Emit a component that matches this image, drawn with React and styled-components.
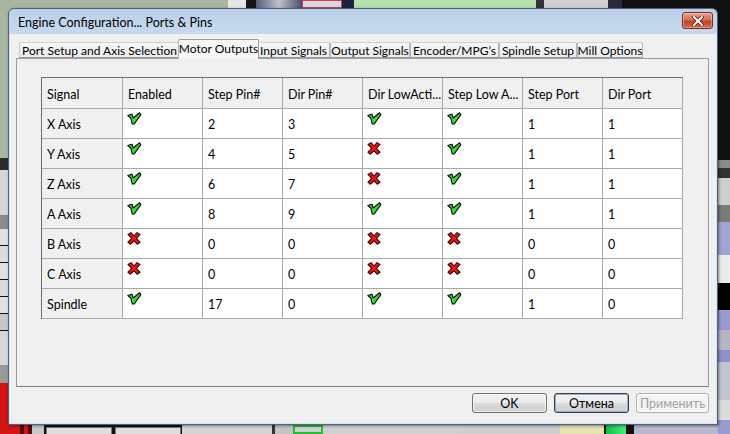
import React from 'react';
import styled, { createGlobalStyle } from 'styled-components';

const Global = createGlobalStyle`
  html, body { margin: 0; padding: 0; }
  body {
    width: 730px; height: 434px; overflow: hidden;
    font-family: Lato, "Noto Sans", "DejaVu Sans", sans-serif;
    font-size: 12px; color: #000;
  }
`;

const Desktop = styled.div`
  position: relative;
  width: 730px;
  height: 434px;
  overflow: hidden;
  background: #111;
`;

const Patch = styled.div`
  position: absolute;
  left: ${p => p.$x}px;
  top: ${p => p.$y}px;
  width: ${p => p.$w}px;
  height: ${p => p.$h}px;
  background: ${p => p.$c};
  border: ${p => p.$b || 'none'};
  box-sizing: border-box;
  overflow: hidden;
  font-family: "Liberation Sans", Arial, sans-serif;
  font-size: ${p => p.$fs || 12}px;
  color: ${p => p.$tc || '#000'};
  line-height: 1;
`;

const PatchText = styled.span`
  position: absolute;
  left: ${p => p.$x}px;
  top: ${p => p.$y}px;
  white-space: nowrap;
`;

const patches = [
  { x: 0, y: 0, w: 228, h: 160, c: '#a8b59f' },
  { x: 228, y: 0, w: 18, h: 8, c: '#e6e6e6' },
  { x: 246, y: 0, w: 10, h: 8, c: '#151515' },
  { x: 256, y: 0, w: 46, h: 8, c: 'linear-gradient(90deg,#5a5f7a,#c0c0c8,#4a4e6a)' },
  { x: 302, y: 0, w: 40, h: 8, c: '#d8d8d8', b: '1px solid #c04060' },
  { x: 342, y: 0, w: 12, h: 8, c: '#1d2140' },
  { x: 354, y: 0, w: 182, h: 8, c: '#b4e0ac' },
  { x: 536, y: 0, w: 8, h: 8, c: '#333' },
  { x: 544, y: 0, w: 64, h: 8, c: '#cfcfcf' },
  { x: 608, y: 0, w: 14, h: 8, c: '#2a2a3a' },
  { x: 0, y: 158, w: 8, h: 12, c: '#2a2a2a' },
  { x: 0, y: 170, w: 8, h: 45, c: '#d6d6d6' },
  { x: 0, y: 215, w: 8, h: 14, c: '#8a8a8a' },
  { x: 0, y: 229, w: 8, h: 16, c: '#e2e2e2' },
  { x: 0, y: 246, w: 8, h: 16, c: '#dcdcdc' },
  { x: 0, y: 263, w: 8, h: 16, c: '#e2e2e2' },
  { x: 0, y: 280, w: 8, h: 16, c: '#dcdcdc' },
  { x: 0, y: 297, w: 8, h: 16, c: '#e2e2e2' },
  { x: 0, y: 314, w: 8, h: 16, c: '#c8c8c8' },
  { x: 0, y: 331, w: 8, h: 34, c: '#d8d8d8' },
  { x: 0, y: 365, w: 8, h: 18, c: '#9a9a9a' },
  { x: 0, y: 383, w: 8, h: 51, c: '#d41414' },
  { x: 0, y: 425, w: 30, h: 9, c: '#d41414' },
  { x: 20, y: 425, w: 4, h: 9, c: '#5a0a0a' },
  { x: 28, y: 425, w: 4, h: 9, c: '#5a0a0a' },
  { x: 32, y: 425, w: 12, h: 9, c: '#c8c8c8' },
  { x: 46, y: 427, w: 66, h: 9, c: '#dedede', b: '1px solid #777' },
  { x: 115, y: 427, w: 66, h: 9, c: '#dedede', b: '1px solid #777' },
  { x: 182, y: 425, w: 90, h: 9, c: '#d4d4d4' },
  { x: 272, y: 425, w: 3, h: 9, c: '#333' },
  { x: 275, y: 425, w: 18, h: 9, c: '#c4c4c4' },
  { x: 293, y: 425, w: 30, h: 9, c: '#d0d0d0', b: '2px solid #22c030' },
  { x: 323, y: 425, w: 137, h: 9, c: '#d0d0d0' },
  { x: 460, y: 425, w: 100, h: 9, c: '#cfcfcf' },
  { x: 560, y: 425, w: 44, h: 9, c: '#e6e2b0' },
  { x: 606, y: 425, w: 20, h: 9, c: 'linear-gradient(90deg,#10c040,#40f080)' },
  { x: 626, y: 425, w: 8, h: 9, c: '#111' },
  { x: 634, y: 425, w: 96, h: 9, c: '#b8b8d0' },
  { x: 718, y: 160, w: 12, h: 8, c: '#8a8a8a' },
  { x: 718, y: 168, w: 12, h: 10, c: '#333' },
  { x: 718, y: 178, w: 12, h: 27, c: '#cfcfcf' },
  { x: 718, y: 205, w: 12, h: 17, c: '#7a7a7a' },
  { x: 718, y: 222, w: 12, h: 33, c: '#a4a4d4' },
  { x: 718, y: 255, w: 12, h: 28, c: '#ececec' },
  { x: 718, y: 283, w: 12, h: 27, c: '#000' },
  { x: 718, y: 310, w: 12, h: 20, c: '#9a9ad0' },
  { x: 718, y: 330, w: 12, h: 20, c: '#b4b4c4' },
  { x: 718, y: 350, w: 12, h: 12, c: '#9090c8' },
  { x: 718, y: 362, w: 12, h: 38, c: '#c4c4d0' },
  { x: 718, y: 400, w: 12, h: 20, c: '#dcdcdc' },
  { x: 718, y: 420, w: 12, h: 14, c: '#9a9ad0' },
];

const Window = styled.div`
  position: absolute;
  left: 8px;
  top: 8px;
  width: 710px;
  height: 417px;
  box-sizing: border-box;
  border: 1px solid #4d6380;
  border-radius: 6px 6px 0 0;
  background: linear-gradient(180deg, #bbd0e8 0px, #c6d9ee 25px, #d6e4f3 26px, #d6e4f3 100%);
  box-shadow: 1px 1px 3px rgba(0, 0, 0, 0.45);
  display: flex;
  flex-direction: column;
  padding: 0 1px 1px 1px;
`;

const TitleBar = styled.div`
  height: 25px;
  display: flex;
  align-items: center;
  justify-content: space-between;
  padding: 1px 3px 0 8px;
  box-sizing: border-box;
`;

const Title = styled.div`
  font-size: 12.5px;
  color: #000;
`;

const CloseButton = styled.div`
  width: 31px;
  height: 17px;
  margin-top: -3px;
  box-sizing: border-box;
  border: 1px solid #7a2a1f;
  border-radius: 3px;
  background: linear-gradient(180deg, #e6a28f 0%, #d2715a 45%, #c0442a 55%, #d56a4c 100%);
  display: flex;
  align-items: center;
  justify-content: center;
  box-shadow: inset 0 0 0 1px rgba(255, 255, 255, 0.35);
`;

const Client = styled.div`
  flex: 1;
  background: #f0f0f0;
  display: flex;
  flex-direction: column;
  padding: 5px 7px 0 6px;
  box-sizing: border-box;
`;

const TabStrip = styled.div`
  display: flex;
  align-items: flex-end;
  height: 19px;
  padding-left: 3px;
  position: relative;
  z-index: 1;
`;

const Tab = styled.div`
  box-sizing: border-box;
  width: ${p => p.$w}px;
  height: ${p => (p.$active ? 20 : 16)}px;
  margin: ${p => (p.$active ? '0 -2px -1px -2px' : '0')};
  background: ${p => (p.$active ? '#f7f7f7' : 'linear-gradient(180deg, #f7f7f7, #ececec)')};
  border: 1px solid ${p => (p.$active ? '#999ca3' : '#b4b6bb')};
  border-top-color: ${p => (p.$active ? '#999ca3' : '#d0d0d0')};
  border-bottom: ${p => (p.$active ? 'none' : '1px solid #999ca3')};
  border-left-color: ${p => (p.$first ? '#c8c8c8' : '#b4b6bb')};
  border-radius: 2px 2px 0 0;
  display: flex;
  align-items: center;
  justify-content: center;
  padding-bottom: ${p => (p.$active ? 3 : 0)}px;
  font-size: 12px;
  white-space: nowrap;
  position: relative;
  z-index: ${p => (p.$active ? 2 : 0)};
`;

const Panel = styled.div`
  height: 329px;
  box-sizing: border-box;
  border: 1px solid #999ca3;
  border-bottom-color: #7f7f7f;
  background: #f0f0f0;
  padding: 18px 0 0 24px;
`;

const Grid = styled.div`
  display: grid;
  grid-template-columns: 81px repeat(7, 80px);
  grid-template-rows: 31px repeat(7, 30px);
  width: 642px;
  box-sizing: border-box;
  border-left: 1px solid #6d6d6d;
  border-top: 1px solid #6d6d6d;
  background: #fff;
`;

const Cell = styled.div`
  box-sizing: border-box;
  border-right: 1px solid #a9a9a9;
  border-bottom: 1px solid #a9a9a9;
  background: ${p => (p.$head ? '#f0f0f0' : '#fff')};
  display: flex;
  align-items: ${p => (p.$icon ? 'flex-start' : 'center')};
  padding: ${p => (p.$icon ? '3px 4px' : '2px 4px 0 5px')};
  font-size: 12.5px;
  white-space: nowrap;
  overflow: hidden;
`;

const ButtonRow = styled.div`
  display: flex;
  justify-content: flex-end;
  gap: 7px;
  margin-top: 6px;
`;

const Button = styled.div`
  width: ${p => p.$w || 75}px;
  height: 20px;
  box-sizing: border-box;
  border: 1px solid ${p => (p.$disabled ? '#adb2b5' : p.$default ? '#3c3c3c' : '#707070')};
  border-radius: 3px;
  background: ${p => (p.$disabled ? '#f4f4f4' : 'linear-gradient(180deg, #f2f2f2 0%, #ebebeb 50%, #dddddd 51%, #cfcfcf 100%)')};
  box-shadow: ${p => (p.$default ? 'inset 0 0 0 1px #8fb4d8' : 'inset 0 0 0 1px rgba(255,255,255,0.7)')};
  color: ${p => (p.$disabled ? '#a0a0a0' : '#000')};
  display: flex;
  align-items: center;
  justify-content: center;
  font-size: 12.5px;
`;

const CheckIcon = () => (
  <svg width="15" height="13" viewBox="0 0 15 13">
    <polygon
      points="0.8,3.6 5,2.2 6.2,6 12.6,0.8 13.8,2.6 7.2,12 5.2,12 3.8,6"
      fill="#36dd2e"
      stroke="#000"
      strokeWidth="1.1"
      strokeLinejoin="round"
    />
  </svg>
);

const CrossIcon = () => (
  <svg width="14" height="13" viewBox="0 0 14 13">
    <polygon
      points="1,2.4 4,0.6 7,4 10,0.6 13,2.4 9.4,6.4 13,10.2 10.2,12.2 7,8.8 3.6,12.2 1,10.2 4.6,6.4"
      fill="#e0161c"
      stroke="#3e0505"
      strokeWidth="1.1"
      strokeLinejoin="round"
    />
  </svg>
);

const tabs = [
  { label: 'Port Setup and Axis Selection', w: 161 },
  { label: 'Motor Outputs', w: 81, active: true },
  { label: 'Input Signals', w: 73 },
  { label: 'Output Signals', w: 80 },
  { label: 'Encoder/MPG\u2019s', w: 89 },
  { label: 'Spindle Setup', w: 78 },
  { label: 'Mill Options', w: 66 },
];

const headers = ['Signal', 'Enabled', 'Step Pin#', 'Dir Pin#', 'Dir LowActi...', 'Step Low A...', 'Step Port', 'Dir Port'];

const rows = [
  ['X Axis', true, '2', '3', true, true, '1', '1'],
  ['Y Axis', true, '4', '5', false, true, '1', '1'],
  ['Z Axis', true, '6', '7', false, true, '1', '1'],
  ['A Axis', true, '8', '9', true, true, '1', '1'],
  ['B Axis', false, '0', '0', false, false, '0', '0'],
  ['C Axis', false, '0', '0', false, false, '0', '0'],
  ['Spindle', true, '17', '0', true, true, '1', '0'],
];

export default function App() {
  return (
    <Desktop>
      <Global />
      {patches.map((p, i) => (
        <Patch key={i} $x={p.x} $y={p.y} $w={p.w} $h={p.h} $c={p.c} $b={p.b} $fs={p.fs} $tc={p.tc}>
          {p.t && <PatchText $x={p.tx} $y={p.ty}>{p.t}</PatchText>}
        </Patch>
      ))}
      <Window>
        <TitleBar>
          <Title>Engine Configuration... Ports &amp; Pins</Title>
          <CloseButton>
            <svg width="12" height="10" viewBox="0 0 12 10">
              <path d="M2 1 L10 9 M10 1 L2 9" stroke="#5a1a10" strokeWidth="3.6" strokeLinecap="square" />
              <path d="M2 1 L10 9 M10 1 L2 9" stroke="#fff" strokeWidth="2" strokeLinecap="square" />
            </svg>
          </CloseButton>
        </TitleBar>
        <Client>
          <TabStrip>
            {tabs.map((t, i) => (
              <Tab key={t.label} $w={t.w} $active={t.active} $first={i === 0}>
                {t.label}
              </Tab>
            ))}
          </TabStrip>
          <Panel>
            <Grid>
              {headers.map(h => (
                <Cell key={h} $head>{h}</Cell>
              ))}
              {rows.map(r =>
                r.map((v, j) => {
                  if (j === 0) return <Cell key={r[0] + j} $head>{v}</Cell>;
                  if (typeof v === 'boolean')
                    return (
                      <Cell key={r[0] + j} $icon>
                        {v ? <CheckIcon /> : <CrossIcon />}
                      </Cell>
                    );
                  return <Cell key={r[0] + j}>{v}</Cell>;
                })
              )}
            </Grid>
          </Panel>
          <ButtonRow>
            <Button>OK</Button>
            <Button $default>Отмена</Button>
            <Button $disabled $w={73}>Применить</Button>
          </ButtonRow>
        </Client>
      </Window>
    </Desktop>
  );
}
